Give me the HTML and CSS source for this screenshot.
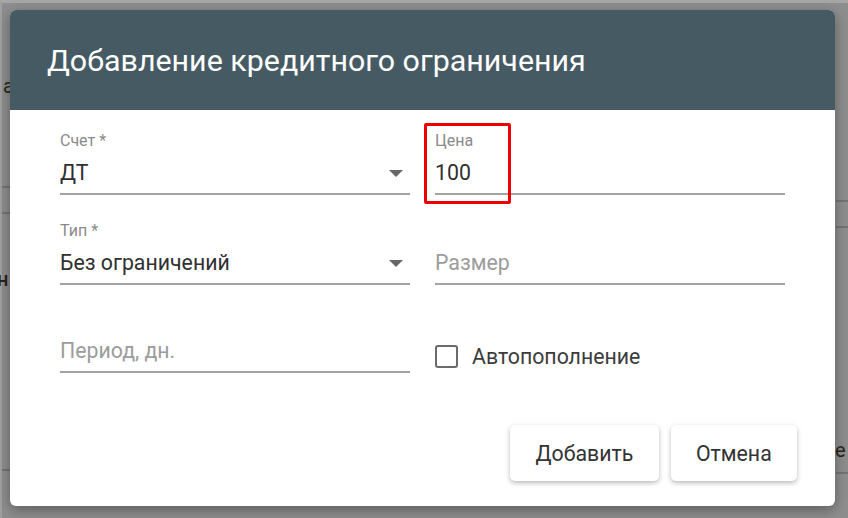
FILE: index.html
```html
<!DOCTYPE html>
<html lang="ru">
<head>
<meta charset="utf-8">
<title>Добавление кредитного ограничения</title>
<link rel="stylesheet" href="styles.css">
</head>
<body>
<div class="page">
  <div class="page-side page-left">
    <div class="frag frag-a">а</div>
    <div class="rule rule-1"></div>
    <div class="rule rule-2"></div>
    <div class="frag frag-n">н</div>
    <div class="rule rule-3"></div>
  </div>
  <div class="page-mid"></div>
  <div class="page-side page-right">
    <div class="rule rule-1r"></div>
    <div class="rule rule-2"></div>
    <div class="frag frag-e">е</div>
    <div class="rule rule-3r"></div>
  </div>
</div>

<div class="dialog">
  <header class="dialog-title">Добавление кредитного ограничения</header>
  <div class="dialog-body">
    <div class="form-grid">
      <div class="field select">
        <div class="label">Счет *</div>
        <div class="value">ДТ<span class="arrow"></span></div>
      </div>
      <div class="field">
        <div class="label">Цена</div>
        <div class="value">100</div>
      </div>
      <div class="field select">
        <div class="label">Тип *</div>
        <div class="value">Без ограничений<span class="arrow"></span></div>
      </div>
      <div class="field">
        <div class="label"></div>
        <div class="value placeholder">Размер</div>
      </div>
      <div class="field compact">
        <div class="label"></div>
        <div class="value placeholder">Период, дн.</div>
      </div>
      <div class="check">
        <span class="box"></span>
        <span class="check-text">Автопополнение</span>
      </div>
    </div>
    <div class="actions">
      <button class="btn">Добавить</button>
      <button class="btn">Отмена</button>
    </div>
  </div>
  <div class="highlight"></div>
</div>
</body>
</html>
```

FILE: styles.css
```css
html, body {
  margin: 0;
  padding: 0;
  width: 848px;
  height: 518px;
  overflow: hidden;
}

body {
  background: #8e8e8e;
  font-family: Roboto, "Liberation Sans", Arial, sans-serif;
  position: relative;
}

/* dimmed page behind the modal */
.page {
  display: grid;
  grid-template-columns: 12px 1fr 12px;
  height: 518px;
  box-sizing: border-box;
  border-top: 3px solid #a6a6a6;
  border-left: 2px solid #a0a0a0;
}

.page-side {
  display: flex;
  flex-direction: column;
}

.frag {
  font-size: 20px;
  line-height: 20px;
  color: #2a2418;
  font-family: Roboto, "Liberation Sans", sans-serif;
}

.frag-a { margin-top: 73px; margin-left: 1px; }
.frag-n { margin-top: 55px; margin-left: -5px; font-weight: 500; }
.frag-e { margin-top: 212px; margin-left: -1px; }

.rule {
  height: 2px;
  background: #747474;
}
.rule-1 { margin-top: 90px; }
.rule-2 { margin-top: 24px; }
.rule-3 { margin-top: 180px; }
.rule-1r { margin-top: 197px; }
.rule-3r { margin-top: 12px; }

/* dialog */
.dialog {
  position: absolute;
  left: 10px;
  top: 10px;
  width: 825px;
  background: #fff;
  border-radius: 6px;
  box-shadow: 0 4px 14px rgba(0, 0, 0, 0.35);
}

.dialog-title {
  height: 100px;
  display: flex;
  align-items: center;
  padding-left: 37px;
  background: #465a64;
  color: #fff;
  font-size: 30.4px;
  border-radius: 6px 6px 0 0;
}

.dialog-body {
  padding: 22px 50px 25px 50px;
}

.form-grid {
  display: grid;
  grid-template-columns: 350px 350px;
  column-gap: 25px;
  row-gap: 27px;
}

.field {
  display: flex;
  flex-direction: column;
  border-bottom: 2px solid #a3a3a3;
}

.label {
  height: 18px;
  font-size: 16px;
  line-height: 18px;
  color: #8a8a8a;
}

.field.compact .label {
  height: 16px;
}

.value {
  margin-top: 11px;
  padding-bottom: 8px;
  font-size: 21.3px;
  line-height: 24px;
  color: #303030;
  display: flex;
  align-items: center;
  justify-content: space-between;
}

.value.placeholder {
  color: #9c9c9c;
}

.arrow {
  width: 0;
  height: 0;
  margin-right: 7px;
  border-left: 7px solid transparent;
  border-right: 7px solid transparent;
  border-top: 7px solid #666;
}

.check {
  align-self: end;
  display: flex;
  align-items: center;
  gap: 14px;
  margin-bottom: 4px;
}

.box {
  width: 19px;
  height: 19px;
  border: 2px solid #6a6a6a;
  border-radius: 3px;
}

.check-text {
  font-size: 21.3px;
  color: #3c3c3c;
}

.actions {
  display: flex;
  justify-content: flex-end;
  gap: 12px;
  margin-top: 52px;
  margin-right: -12px;
}

.btn {
  height: 56px;
  padding: 0 25.25px;
  border: none;
  border-radius: 5px;
  background: #fff;
  font-family: Roboto, "Liberation Sans", sans-serif;
  font-size: 21.3px;
  color: #333;
  box-shadow: 0 2px 5px rgba(0, 0, 0, 0.28);
}

.highlight {
  position: absolute;
  left: 414px;
  top: 113px;
  width: 81px;
  height: 75px;
  border: 3px solid #ee0000;
  border-radius: 2px;
}
```
